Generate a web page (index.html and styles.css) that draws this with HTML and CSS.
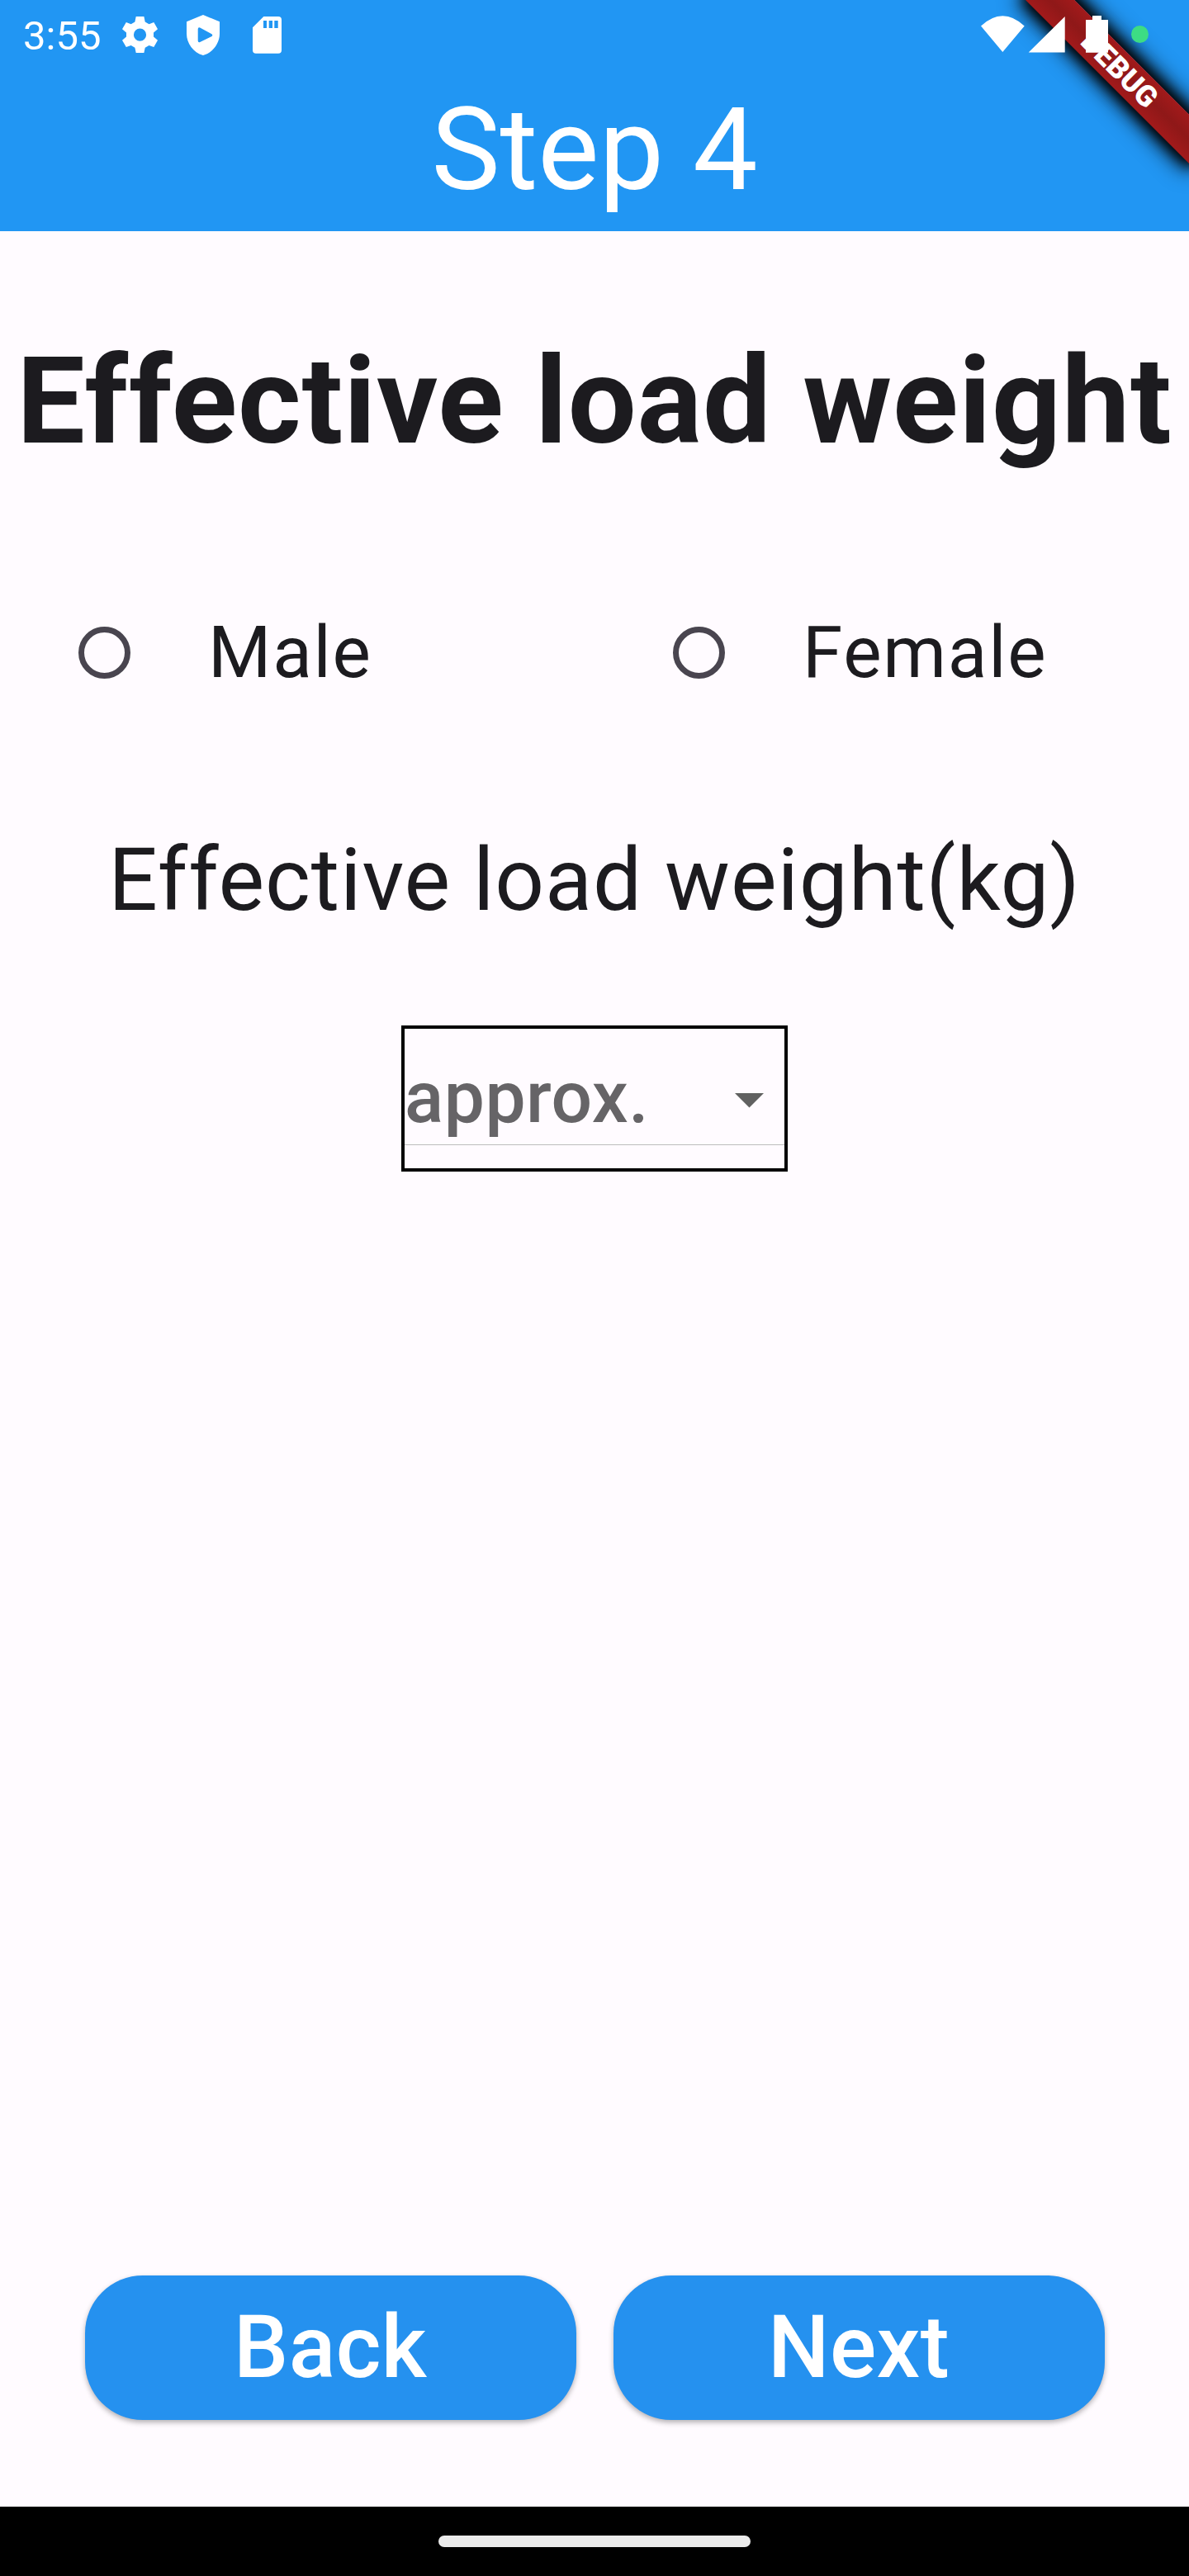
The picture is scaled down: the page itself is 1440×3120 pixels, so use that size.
FILE: index.html
```html
<!DOCTYPE html>
<html lang="en">
<head>
<meta charset="utf-8">
<title>Step 4</title>
<link rel="stylesheet" href="styles.css">
</head>
<body>
<div class="screen">
  <header class="app-bar">
    <div class="status">
      <span class="clock">3:55</span>
      <svg class="ico-gear" viewBox="0 0 43 44" width="43" height="44"><path fill="#fff" fill-rule="evenodd" d="M16.7 0H26.4L27.7 6.4 32.5 9.2 38.3 7 43 15.3 38 19.6V24.6L43 28.8 38.3 37 32.5 34.9 27.7 37.7 26.4 44H16.7L15.4 37.7 10.7 34.9 4.8 37 0 28.8 5 24.6V19.6L0 15.3 4.8 7 10.7 9.2 15.4 6.4ZM21.5 14.6A7.6 7.6 0 1 0 21.5 29.8 7.6 7.6 0 1 0 21.5 14.6Z"/></svg>
      <svg class="ico-shield" viewBox="0 0 40 49" width="40" height="49"><path fill="#fff" fill-rule="evenodd" d="M20 0L40 8.3V23C40 34 32 46 20 49 8 46 0 34 0 23V8.3ZM13.7 17V31.5Q14 34 16.2 33L30.5 26Q32 24.7 30.5 23.3L16.2 15.5Q14 14.5 13.7 17Z"/></svg>
      <svg class="ico-sd" viewBox="0 0 35 45" width="35" height="45"><path fill="#fff" fill-rule="evenodd" d="M13.3 0H31Q35 0 35 4V41Q35 44.7 31 44.7H4Q0 44.7 0 41V13.3ZM13 5V14H17V5ZM19.7 5V14H24V5ZM26.3 5V14H30.7V5Z"/></svg>
      <span class="spacer"></span>
      <svg class="ico-right" viewBox="0 0 204 46" width="204" height="46"><path fill="#fff" d="M0 12.5Q26.3-12 52.7 12.5L26.3 44ZM57.7 44.5L101.7 1V44.5ZM127 44.7V5H135V0H146V5H154V44.7Z"/><circle cx="192.5" cy="22.5" r="10.5" fill="#3ddc84"/></svg>
    </div>
    <h1 class="app-title">Step 4</h1>
    <div class="debug"><span>DEBUG</span></div>
  </header>
  <main class="content">
    <h2 class="heading">Effective load weight</h2>
    <div class="radios">
      <label class="radio"><span class="dot"></span>Male</label>
      <label class="radio"><span class="dot"></span>Female</label>
    </div>
    <p class="subtitle">Effective load weight(kg)</p>
    <div class="select">
      <div class="select-row"><span>approx.</span><svg class="caret" viewBox="0 0 35 18" width="35" height="18"><path fill="#616161" d="M0 0H35L17.5 17.5Z"/></svg></div>
    </div>
    <div class="actions">
      <button class="btn">Back</button>
      <button class="btn">Next</button>
    </div>
  </main>
  <footer class="nav-bar"><span class="handle"></span></footer>
</div>
</body>
</html>
```
FILE: styles.css
```css
* { box-sizing: border-box; }
body { margin: 0; font-family: Roboto, sans-serif; color: #1c1b1f; }
.screen {
  width: 1440px;
  height: 3120px;
  display: flex;
  flex-direction: column;
  background: #fffbff;
  overflow: hidden;
}
.app-bar {
  position: relative;
  height: 280px;
  background: #2196f3;
  color: #fff;
  overflow: hidden;
}
.status {
  position: relative;
  z-index: 2;
  height: 88px;
  display: flex;
  align-items: flex-start;
  padding: 0 48px 0 28px;
}
.clock { width: 120px; font-size: 49px; line-height: 56px; padding-top: 16px; }
.ico-gear { margin-top: 20px; }
.ico-shield { margin: 18px 0 0 35px; }
.ico-sd { margin: 20px 0 0 40px; }
.spacer { flex: 1; }
.ico-right { margin-top: 19px; }
.app-title {
  margin: 0;
  text-align: center;
  font-size: 140px;
  line-height: 186px;
  font-weight: 400;
}
.debug {
  position: absolute;
  z-index: 1;
  left: 1300px;
  top: 98px;
  width: 280px;
  height: 42px;
  transform-origin: 140px -98px;
  transform: rotate(45deg);
  background: linear-gradient(#a21a1b, #8f1818 50%, #a21a1b);
  box-shadow: 0 0 28px 6px #000, 0 0 16px 3px #000;
  font-size: 35.7px;
  line-height: 42px;
  font-weight: 900;
  text-align: center;
}
.content { flex: 1; display: flex; flex-direction: column; align-items: center; }
.heading {
  margin: 120px 0 0;
  font-size: 147px;
  line-height: 172px;
  font-weight: 700;
  letter-spacing: .875px;
  white-space: nowrap;
}
.radios { display: flex; width: 100%; margin-top: 120px; }
.radio {
  width: 720px;
  height: 196px;
  padding-left: 94.5px;
  display: flex;
  align-items: center;
  gap: 94.5px;
  font-size: 87.5px;
  letter-spacing: 1.75px;
}
.dot { width: 63px; height: 63px; margin-top: 1px; border: 7px solid #49454f; border-radius: 50%; }
.subtitle {
  margin: 117px 0 0;
  font-size: 105px;
  line-height: 124px;
  letter-spacing: .875px;
  white-space: nowrap;
}
.select {
  width: 468px;
  height: 177px;
  margin-top: 113px;
  border: 4px solid #000;
}
.select-row {
  height: 141px;
  display: flex;
  align-items: center;
  justify-content: space-between;
  padding: 26px 25px 0 0;
  border-bottom: 1px solid #bdbdbd;
  font-size: 87.5px;
  line-height: 108px;
  font-weight: 500;
  letter-spacing: .525px;
  color: #666467;
}
.caret { margin-top: 7px; }
.actions { display: flex; gap: 45px; margin-top: auto; padding-bottom: 105px; }
.btn {
  width: 595px;
  height: 175px;
  padding: 0;
  border: 0;
  border-radius: 70px;
  background: #2591ef;
  box-shadow: 0 3px 6px rgba(0, 0, 0, .3);
  color: #fff;
  font: 500 105px/176px Roboto, sans-serif;
  letter-spacing: .35px;
}
.nav-bar { height: 84px; display: flex; justify-content: center; padding-top: 35px; background: #000; }
.handle { width: 378px; height: 14px; border-radius: 7px; background: #ebebeb; }
```
